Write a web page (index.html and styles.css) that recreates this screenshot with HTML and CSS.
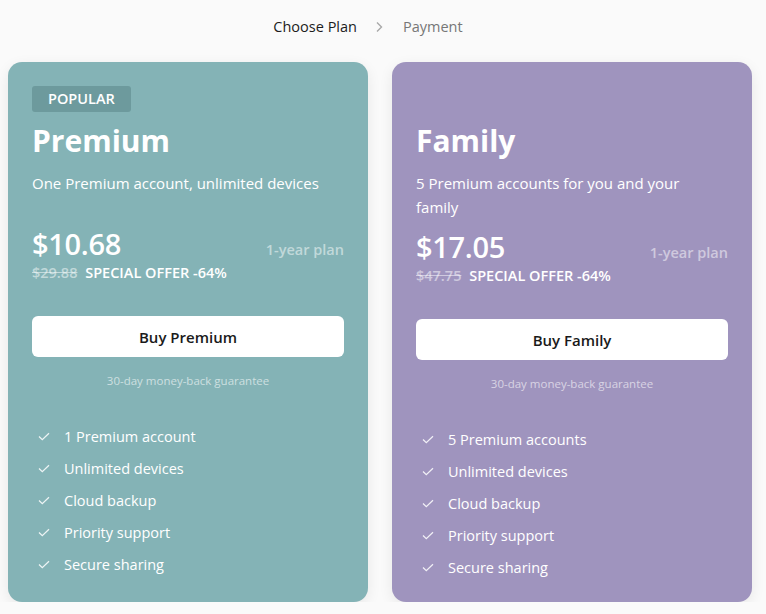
FILE: index.html
```html
<!DOCTYPE html>
<html lang="en">
<head>
    <meta charset="UTF-8">
    <meta name="viewport" content="width=device-width, initial-scale=1.0">
    <title>Choose Plan</title>
    <link rel="stylesheet" href="styles.css">
</head>
<body>
    <nav class="steps">
        <span class="step current">Choose Plan</span>
        <svg class="chevron" width="10" height="12" viewBox="0 0 10 12"><polyline points="3,1.5 7.5,6 3,10.5" fill="none" stroke="#a8a8a8" stroke-width="1.4"/></svg>
        <span class="step">Payment</span>
    </nav>

    <div class="plans">
        <div class="card premium">
            <div class="badge">POPULAR</div>
            <h2>Premium</h2>
            <p class="desc">One Premium account, unlimited devices</p>
            <div class="price-row">
                <span class="price">$10.68</span>
                <span class="term">1-year plan</span>
            </div>
            <div class="offer"><s>$29.88</s> SPECIAL OFFER -64%</div>
            <button>Buy Premium</button>
            <div class="guarantee">30-day money-back guarantee</div>
            <ul class="features">
                <li><svg viewBox="0 0 12 9"><polyline points="1,4.5 4.3,7.6 11,1.2"/></svg>1 Premium account</li>
                <li><svg viewBox="0 0 12 9"><polyline points="1,4.5 4.3,7.6 11,1.2"/></svg>Unlimited devices</li>
                <li><svg viewBox="0 0 12 9"><polyline points="1,4.5 4.3,7.6 11,1.2"/></svg>Cloud backup</li>
                <li><svg viewBox="0 0 12 9"><polyline points="1,4.5 4.3,7.6 11,1.2"/></svg>Priority support</li>
                <li><svg viewBox="0 0 12 9"><polyline points="1,4.5 4.3,7.6 11,1.2"/></svg>Secure sharing</li>
            </ul>
        </div>

        <div class="card family">
            <div class="badge hidden">POPULAR</div>
            <h2>Family</h2>
            <p class="desc">5 Premium accounts for you and your family</p>
            <div class="price-row">
                <span class="price">$17.05</span>
                <span class="term">1-year plan</span>
            </div>
            <div class="offer"><s>$47.75</s> SPECIAL OFFER -64%</div>
            <button>Buy Family</button>
            <div class="guarantee">30-day money-back guarantee</div>
            <ul class="features">
                <li><svg viewBox="0 0 12 9"><polyline points="1,4.5 4.3,7.6 11,1.2"/></svg>5 Premium accounts</li>
                <li><svg viewBox="0 0 12 9"><polyline points="1,4.5 4.3,7.6 11,1.2"/></svg>Unlimited devices</li>
                <li><svg viewBox="0 0 12 9"><polyline points="1,4.5 4.3,7.6 11,1.2"/></svg>Cloud backup</li>
                <li><svg viewBox="0 0 12 9"><polyline points="1,4.5 4.3,7.6 11,1.2"/></svg>Priority support</li>
                <li><svg viewBox="0 0 12 9"><polyline points="1,4.5 4.3,7.6 11,1.2"/></svg>Secure sharing</li>
            </ul>
        </div>
    </div>
</body>
</html>
```
FILE: styles.css
```css
body { font-family: "Open Sans", "Noto Sans", sans-serif; margin: 0; padding: 0; background-color: #fafafa; }

.steps { display: flex; justify-content: center; align-items: center; gap: 14px; padding: 17px 30px 25px 0; font-size: 14.5px; line-height: 20px; }
.step { color: #777; }
.step.current { color: #1c1c1c; margin-right: 3px; }
.chevron { margin-right: 5px; }

.plans { display: grid; grid-template-columns: 360px 360px; gap: 24px; padding: 0 8px; }
.card { border-radius: 14px; padding: 24px 24px 19px; color: #fff; box-shadow: 0 4px 14px rgba(0, 0, 0, 0.08); }
.premium { background-color: #84b3b6; }
.family { background-color: #9f94be; }

.badge { display: inline-block; height: 26px; line-height: 26px; padding: 0 16px; border-radius: 3px; background-color: #6d9a9d; font-size: 14.5px; font-weight: 600; }
.badge.hidden { visibility: hidden; }

h2 { margin: 9px 0 0; font-size: 30px; line-height: 40px; font-weight: 700; }
.desc { margin: 10px 0 0; max-width: 290px; min-height: 45px; font-size: 15px; line-height: 24px; }

.price-row { display: flex; justify-content: space-between; align-items: baseline; margin-top: 10px; }
.price { font-size: 29px; line-height: 36px; font-weight: 600; letter-spacing: -0.3px; }
.term { font-size: 14.5px; font-weight: 600; color: rgba(255, 255, 255, 0.5); }
.offer { margin-top: 1px; font-size: 14.5px; line-height: 20px; font-weight: 600; }
.offer s { color: rgba(255, 255, 255, 0.5); margin-right: 4px; }

button { display: block; width: 100%; height: 41px; margin-top: 33px; border: none; border-radius: 6px; background-color: #fff; color: #1a1a1a; font-family: inherit; font-size: 15px; font-weight: 600; cursor: pointer; }
.guarantee { margin-top: 15px; text-align: center; font-size: 11.5px; line-height: 18px; color: rgba(255, 255, 255, 0.6); }

.features { list-style: none; margin: 30px 0 0; padding: 0; }
.features li { display: flex; align-items: center; height: 32px; font-size: 14.5px; }
.features svg { width: 12px; height: 9px; margin: 0 14px 0 6px; fill: none; stroke: rgba(255, 255, 255, 0.85); stroke-width: 1.3; }
```
